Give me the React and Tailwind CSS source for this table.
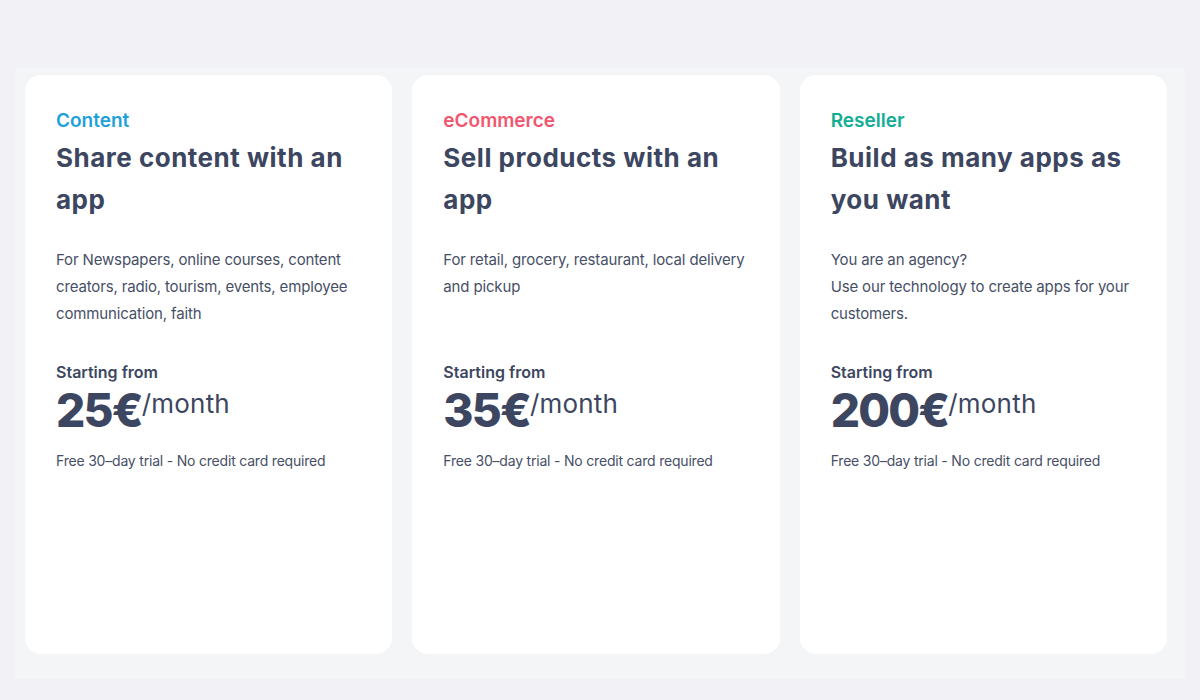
const PLANS = [
  {
    label: 'Content',
    color: 'text-[#1ea1da]',
    title: 'Share content with an app',
    desc: ['For Newspapers, online courses, content creators, radio, tourism, events, employee communication, faith'],
    price: '25€',
  },
  {
    label: 'eCommerce',
    color: 'text-[#f2566f]',
    title: 'Sell products with an app',
    desc: ['For retail, grocery, restaurant, local delivery and pickup'],
    price: '35€',
  },
  {
    label: 'Reseller',
    color: 'text-[#14ad95]',
    title: 'Build as many apps as you want',
    desc: ['You are an agency?', 'Use our technology to create apps for your customers.'],
    price: '200€',
  },
]

function PlanCard({ plan }) {
  return (
    <article className="bg-white rounded-[16px] h-[579px] pt-[35px] px-[31px] text-[#3d4661]">
      <div className={`${plan.color} text-[19px] leading-[22px] font-semibold`}>{plan.label}</div>
      <h2 className="mt-[5px] text-[26px] leading-[42px] font-bold tracking-[0.5px]">{plan.title}</h2>
      <div className="mt-[25px] min-h-[81px] text-[15px] leading-[27px] tracking-[-0.15px] text-[#474f66]">
        {plan.desc.map(line => <p key={line}>{line}</p>)}
      </div>
      <div className="mt-[33px] text-[16px] leading-[24px] font-semibold">Starting from</div>
      <div className="mt-[2px] leading-[48px] whitespace-nowrap">
        <span className="text-[46px] font-extrabold tracking-[-1.8px]">{plan.price}</span>
        <span className="inline-block align-top text-[26px] leading-[36px] font-normal tracking-[0.2px]">/month</span>
      </div>
      <p className="mt-[6px] text-[14px] leading-[20px] tracking-[-0.2px] text-[#474f66]">Free 30–day trial - No credit card required</p>
    </article>
  )
}

export default function App() {
  return (
    <div className="min-h-[700px] bg-[#f2f2f6] pt-[68px] font-['Inter',sans-serif]">
      <section className="mx-[15px] bg-[#f4f5f7] pt-[7px] pb-[25px] pl-[10px] pr-[18px]">
        <div className="grid grid-cols-3 gap-[20px]">
          {PLANS.map(plan => <PlanCard key={plan.label} plan={plan} />)}
        </div>
      </section>
    </div>
  )
}
